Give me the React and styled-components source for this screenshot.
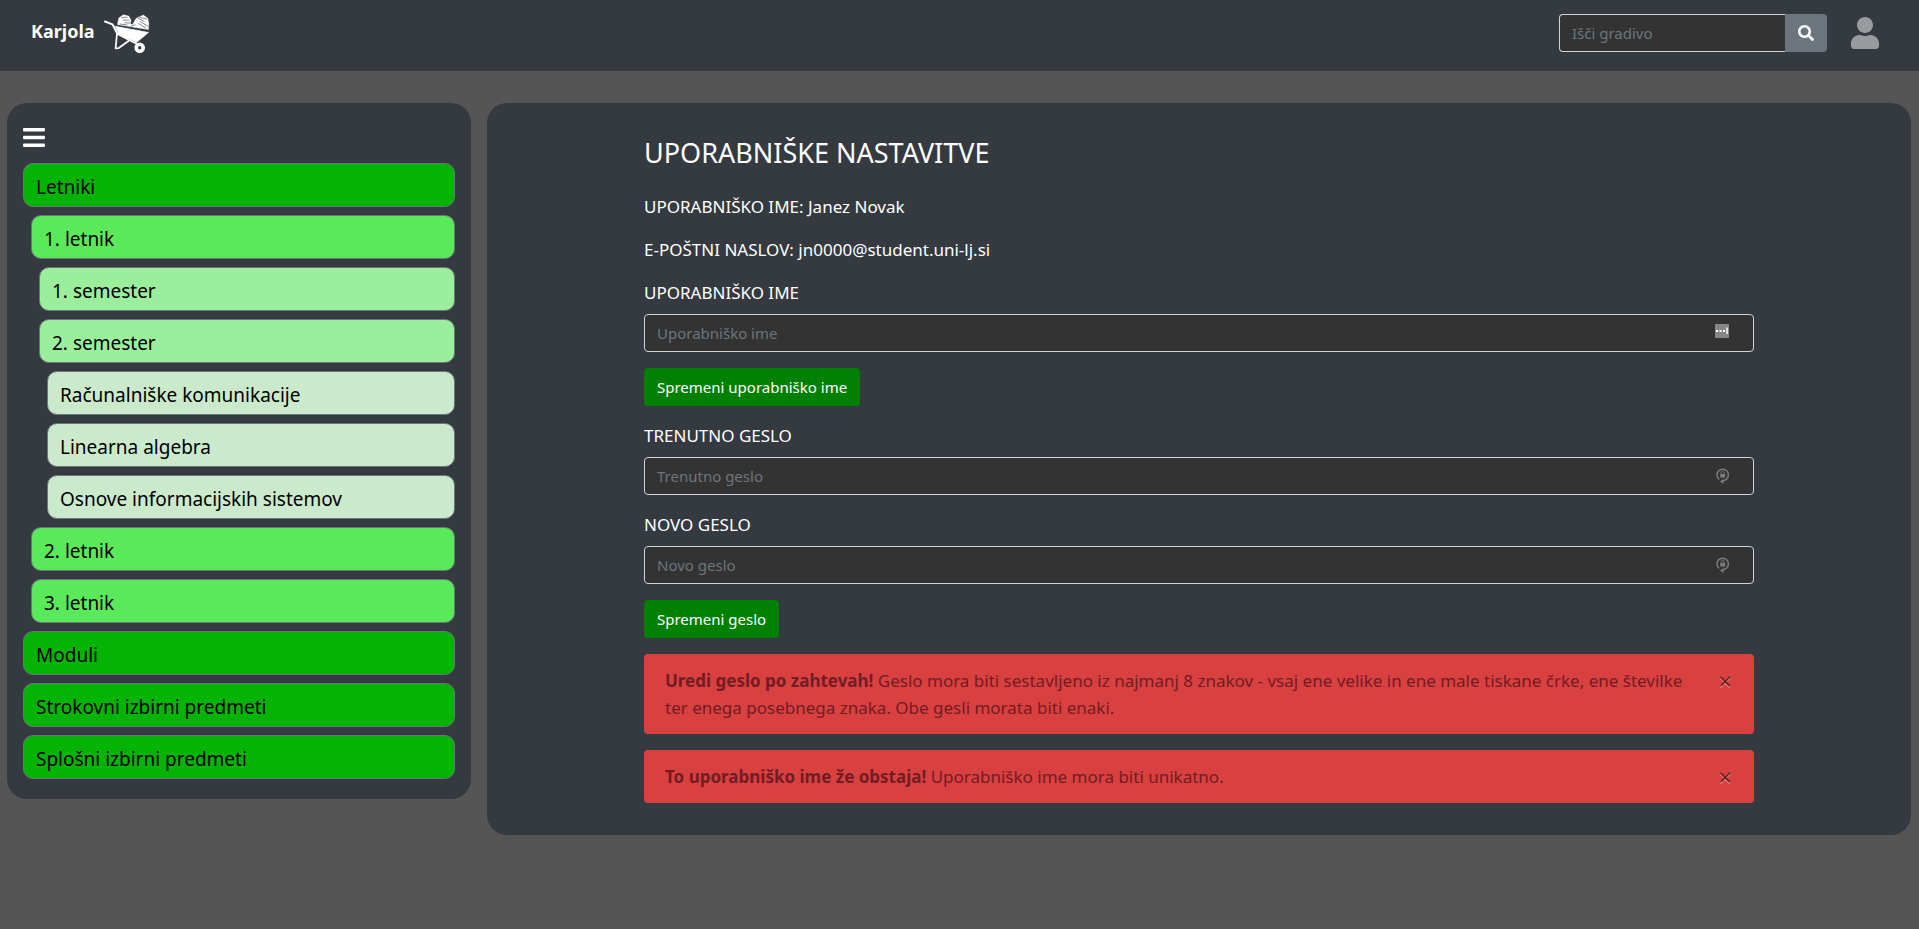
import React from 'react';
import styled, { createGlobalStyle } from 'styled-components';
import { FaBars, FaSearch, FaUser } from 'react-icons/fa';

const GlobalStyle = createGlobalStyle`
  *, *::before, *::after { box-sizing: border-box; }
  body {
    margin: 0;
    background: #555;
    color: #fff;
    font-family: "Noto Sans", "Open Sans", sans-serif;
    font-size: 17px;
    line-height: 27px;
  }
  button, input { font-family: inherit; }
`;

const Header = styled.header`
  display: flex;
  align-items: flex-start;
  justify-content: space-between;
  padding: 14px 40px 19px 31px;
  background: #343a40;
`;

const Brand = styled.a`
  display: flex;
  gap: 8px;
  height: 38px;
  color: #fff;
  font-size: 18px;
  font-weight: 700;
  line-height: 34px;
  text-decoration: none;
`;

const HeaderTools = styled.div`
  display: flex;
  align-items: center;
  gap: 24px;
`;

const SearchForm = styled.form`
  display: flex;
`;

const TextInput = styled.input`
  display: block;
  width: 100%;
  height: 38px;
  padding: 6px 12px;
  border: 1px solid #ced4da;
  border-radius: 4px;
  background: #333;
  color: #fff;
  font-size: 15px;
  line-height: 24px;

  &::placeholder {
    color: #6c757d;
    opacity: 1;
  }
`;

const SearchInput = styled(TextInput)`
  width: 226px;
  border-right: 0;
  border-radius: 4px 0 0 4px;
`;

const SearchButton = styled.button`
  display: flex;
  align-items: center;
  justify-content: center;
  width: 42px;
  height: 38px;
  padding: 0;
  border: 0;
  border-radius: 0 4px 4px 0;
  background: #6c757d;
  color: #fff;
  font-size: 16px;
  cursor: pointer;
`;

const ProfileLink = styled.a`
  display: flex;
  color: #999c9f;

  svg { width: 28px; height: 32px; }
`;

const Page = styled.div`
  display: grid;
  grid-template-columns: minmax(0, 29fr) minmax(0, 89fr);
  align-items: start;
  gap: 16px;
  padding: 32px 8px 32px 7px;
`;

const Panel = styled.div`
  border-radius: 20px;
  background: #343a40;
`;

const Sidebar = styled(Panel).attrs({ as: 'nav' })`
  padding: 22px 16px 20px;
`;

const MenuToggle = styled.button`
  display: flex;
  margin-bottom: 13px;
  padding: 0;
  border: 0;
  background: none;
  color: #fff;
  cursor: pointer;

  svg { width: 22px; height: 25px; }
`;

const MenuList = styled.ul`
  display: flex;
  flex-direction: column;
  gap: 8px;
  margin: 0;
  padding: 0;
  list-style: none;
`;

const levelColors = ['#04b404', '#5ae95a', '#9bee9b', '#cbeacb'];

const MenuItem = styled.li`
  padding-left: ${({ $level }) => $level * 8}px;
`;

const MenuLink = styled.a`
  display: block;
  padding: 9px 12px 5px;
  border: 1px solid #6c757d;
  border-radius: 10px;
  background: ${({ $level }) => levelColors[$level]};
  color: #000;
  font-size: 19px;
  line-height: 28px;
  text-decoration: none;
`;

const Main = styled(Panel).attrs({ as: 'main' })`
  padding: 32px 16px;
`;

const Content = styled.div`
  max-width: 1110px;
  margin: 0 auto;
`;

const Title = styled.h1`
  margin: 0 0 22px;
  font-size: 27px;
  font-weight: 400;
  line-height: 36px;
`;

const Info = styled.p`
  margin: 0 0 16px;
`;

const FormSection = styled.form`
  margin-bottom: 16px;
`;

const FieldGroup = styled.div`
  margin-bottom: 16px;
`;

const Label = styled.label`
  display: block;
  margin-bottom: 8px;
`;

const InputWrap = styled.div`
  position: relative;

  svg {
    position: absolute;
    top: 9px;
    right: 24px;
  }
`;

const SubmitButton = styled.button`
  display: block;
  height: 38px;
  padding: 0 13px;
  border: 0;
  border-radius: 4px;
  background: #008000;
  color: #fff;
  font-size: 15px;
  line-height: 24px;
  cursor: pointer;
`;

const AlertBox = styled.div`
  display: flex;
  align-items: flex-start;
  padding: 13px 21px;
  border-radius: 4px;
  background: #d94040;
  color: #721c24;

  & + & { margin-top: 16px; }
`;

const AlertText = styled.div`
  flex: 1;
  padding-right: 32px;
`;

const CloseButton = styled.button`
  width: 16px;
  padding: 0;
  border: 0;
  background: none;
  color: #000;
  font-size: 24px;
  font-weight: 400;
  line-height: 27px;
  text-shadow: 0 1px 0 #fff;
  opacity: 0.5;
  cursor: pointer;
`;

function WheelbarrowLogo() {
  return (
    <svg width="48" height="40" viewBox="0 0 48 40" fill="none" stroke="#fff" strokeLinecap="round" strokeLinejoin="round" aria-hidden="true">
      <path d="M2 7.5 9.5 10.4 14.5 20" strokeWidth="2" />
      <path d="M14 19.5 12.6 34.4 15.4 34.2 25.5 27" strokeWidth="1.7" />
      <path d="M14.5 20 33 29.5" strokeWidth="1.8" />
      <path d="M12 12 45.5 18.4 33.5 28.6 16 20.2Z" fill="#fff" strokeWidth="0.6" />
      <path d="M14.6 9.7 15.8 4.1 20.3 0.8 25.7 2 28 6 27.5 9.8 29.5 10.8 33 4.5 40.3 1 44.8 4.3 45.8 9 45.4 15.5 34 13.8 14.8 10.7Z" fill="#fff" strokeWidth="0.4" />
      <path d="M18.7 3.7 24.2 3.2M20.5 6 26 6.2M22 8.8 27 9M35.2 4.3 41 7.4M36.8 3.4 43.7 5M37 7.6 45 12.2M35.5 9.5 43 14M28.5 12.2 32.2 10.8M17 10 24 11" stroke="#343a40" strokeWidth="0.6" />
      <path d="M12 11.3 45.6 17.1" stroke="#343a40" strokeWidth="0.8" />
      <circle cx="36.7" cy="33.8" r="3.5" strokeWidth="3.6" />
    </svg>
  );
}

function AutofillIcon() {
  return (
    <svg width="16" height="18" viewBox="0 0 16 18" aria-hidden="true">
      <rect x="1" y="1" width="14" height="14" rx="1" fill="#868686" />
      <path d="M2 7h2v2H2zM5.5 7h2v2h-2zM9 7h2v2H9zM12.4 4.5h1.4v6.5h-1.4z" fill="#fff" />
    </svg>
  );
}

function PasswordIcon() {
  return (
    <svg width="16" height="18" viewBox="0 0 16 18" fill="none" stroke="#7b7b7b" aria-hidden="true">
      <path d="M5.2 13.4A5.7 5.7 0 1 1 12.2 13.4L9 15.2" strokeWidth="1.5" />
      <path d="M7.2 8V6.9a1.5 1.5 0 0 1 3 0V8" strokeWidth="1" />
      <path d="M6.2 8h5v3.6h-5z" fill="#7b7b7b" stroke="none" />
      <path d="M9.4 13v5L6 15.5z" fill="#7b7b7b" stroke="none" />
    </svg>
  );
}

const menu = [
  ['Letniki', 0],
  ['1. letnik', 1],
  ['1. semester', 2],
  ['2. semester', 2],
  ['Računalniške komunikacije', 3],
  ['Linearna algebra', 3],
  ['Osnove informacijskih sistemov', 3],
  ['2. letnik', 1],
  ['3. letnik', 1],
  ['Moduli', 0],
  ['Strokovni izbirni predmeti', 0],
  ['Splošni izbirni predmeti', 0],
];

function Field({ id, label, placeholder, type = 'text', icon }) {
  return (
    <FieldGroup>
      <Label htmlFor={id}>{label}</Label>
      <InputWrap>
        <TextInput id={id} type={type} placeholder={placeholder} />
        {icon}
      </InputWrap>
    </FieldGroup>
  );
}

function Alert({ title, children }) {
  return (
    <AlertBox role="alert">
      <AlertText>
        <strong>{title}</strong> {children}
      </AlertText>
      <CloseButton type="button" aria-label="Zapri">×</CloseButton>
    </AlertBox>
  );
}

export default function App() {
  return (
    <>
      <GlobalStyle />
      <Header>
        <Brand href="#">
          Karjola
          <WheelbarrowLogo />
        </Brand>
        <HeaderTools>
          <SearchForm role="search">
            <SearchInput type="text" placeholder="Išči gradivo" aria-label="Išči gradivo" />
            <SearchButton type="button" aria-label="Išči"><FaSearch /></SearchButton>
          </SearchForm>
          <ProfileLink href="#" aria-label="Profil"><FaUser /></ProfileLink>
        </HeaderTools>
      </Header>
      <Page>
        <Sidebar>
          <MenuToggle type="button" aria-label="Meni"><FaBars /></MenuToggle>
          <MenuList>
            {menu.map(([name, level]) => (
              <MenuItem key={name} $level={level}>
                <MenuLink href="#" $level={level}>{name}</MenuLink>
              </MenuItem>
            ))}
          </MenuList>
        </Sidebar>
        <Main>
          <Content>
            <Title>UPORABNIŠKE NASTAVITVE</Title>
            <Info>UPORABNIŠKO IME: Janez Novak</Info>
            <Info>E-POŠTNI NASLOV: jn0000@student.uni-lj.si</Info>
            <FormSection>
              <Field id="username" label="UPORABNIŠKO IME" placeholder="Uporabniško ime" icon={<AutofillIcon />} />
              <SubmitButton type="button">Spremeni uporabniško ime</SubmitButton>
            </FormSection>
            <FormSection>
              <Field id="current-password" type="password" label="TRENUTNO GESLO" placeholder="Trenutno geslo" icon={<PasswordIcon />} />
              <Field id="new-password" type="password" label="NOVO GESLO" placeholder="Novo geslo" icon={<PasswordIcon />} />
              <SubmitButton type="button">Spremeni geslo</SubmitButton>
            </FormSection>
            <Alert title="Uredi geslo po zahtevah!">
              Geslo mora biti sestavljeno iz najmanj 8 znakov - vsaj ene velike in ene male tiskane črke, ene številke ter enega posebnega znaka. Obe gesli morata biti enaki.
            </Alert>
            <Alert title="To uporabniško ime že obstaja!">Uporabniško ime mora biti unikatno.</Alert>
          </Content>
        </Main>
      </Page>
    </>
  );
}
